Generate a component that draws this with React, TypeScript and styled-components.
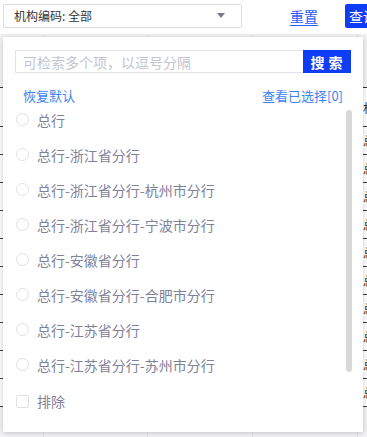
import React from 'react';
import styled, { createGlobalStyle } from 'styled-components';

const GlobalStyle = createGlobalStyle`
  html, body {
    margin: 0;
    padding: 0;
    background: #ffffff;
    font-family: "Noto Sans CJK SC", "Noto Sans", "Liberation Sans", sans-serif;
  }
`;

const Page = styled.div`
  position: relative;
  width: 367px;
  height: 437px;
  overflow: hidden;
  background: #fff;
`;

const Toolbar = styled.div`
  display: flex;
  align-items: center;
  height: 34px;
  padding: 0 0 0 3px;
  box-sizing: border-box;
  white-space: nowrap;
`;

const SelectBox = styled.div`
  display: flex;
  align-items: center;
  justify-content: space-between;
  flex: none;
  width: 239px;
  height: 24px;
  box-sizing: border-box;
  border: 1px solid #dcdce4;
  border-radius: 2px;
  padding: 0 16px 0 10px;
  font-size: 12px;
  color: #333;
  margin-top: -3px;
`;

const Caret = styled.span`
  width: 0;
  height: 0;
  border-left: 4px solid transparent;
  border-right: 4px solid transparent;
  border-top: 5px solid #7a7a82;
`;

const LinkButton = styled.span`
  flex: none;
  margin-left: 48px;
  font-size: 14px;
  color: #2a5cf6;
  text-decoration: underline;
  text-underline-offset: 3px;
  margin-top: -3px;
`;

const PrimaryButton = styled.div`
  flex: none;
  margin-left: 27px;
  height: 24px;
  padding: 0 10px 0 4px;
  display: flex;
  align-items: center;
  background: #0f3cf5;
  color: #fff;
  font-size: 14px;
  border-radius: 2px 0 0 2px;
  margin-top: -3px;
`;

const Table = styled.div`
  display: flex;
  flex-direction: column;
`;

const HeadRow = styled.div`
  display: grid;
  grid-template-columns: 44px 104px 105px 105px 40px;
  height: 53px;
  background: #f3f3f5;
  border-bottom: 1px solid #333;
`;

const Row = styled.div<{ $h: number }>`
  display: grid;
  grid-template-columns: 44px 104px 105px 105px 40px;
  height: ${p => p.$h}px;
  box-sizing: border-box;
  border-bottom: 1px solid #3a3a3a;
  font-size: 12px;
  color: #333;
`;

const FootRow = styled(HeadRow)`
  height: 40px;
  border-bottom: none;
`;

const Cell = styled.div`
  border-right: 1px solid #e4e4e8;
  display: flex;
  align-items: center;
  padding-left: 5px;
  overflow: hidden;
  white-space: nowrap;
`;

const Popover = styled.div`
  position: absolute;
  left: 3px;
  top: 37px;
  width: 360px;
  height: 395px;
  background: #fff;
  box-shadow: 0 1px 6px rgba(0, 0, 0, 0.2);
  display: flex;
  flex-direction: column;
  box-sizing: border-box;
  padding-top: 13px;
`;

const SearchRow = styled.div`
  display: flex;
  height: 23px;
  margin: 0 12px;
`;

const SearchInput = styled.div`
  flex: 1;
  box-sizing: border-box;
  border: 1px solid #e2e3ea;
  border-right: none;
  display: flex;
  align-items: center;
  padding-left: 7px;
  font-size: 14px;
  color: #c3c5cf;
`;

const SearchButton = styled.div`
  width: 48px;
  background: #0f3cf5;
  color: #fff;
  font-size: 14px;
  font-weight: 700;
  letter-spacing: 4px;
  display: flex;
  align-items: center;
  justify-content: center;
  padding-left: 3px;
  box-sizing: border-box;
`;

const LinkRow = styled.div`
  display: flex;
  justify-content: space-between;
  align-items: center;
  height: 18px;
  margin: 13px 20px 0 20px;
  font-size: 13px;
  color: #3d82f2;
`;

const List = styled.div`
  position: relative;
  height: 280px;
  overflow: hidden;
`;

const Item = styled.div`
  display: flex;
  align-items: center;
  height: 35px;
  padding-left: 13px;
  font-size: 14px;
  color: #7e8198;
  margin-top: -2px;
  margin-bottom: 2px;
`;

const Radio = styled.span`
  width: 13px;
  height: 13px;
  box-sizing: border-box;
  border: 1px solid #dfe0e8;
  border-radius: 50%;
  margin-right: 8px;
  flex: none;
`;

const ScrollThumb = styled.div`
  position: absolute;
  right: 11px;
  top: 6px;
  width: 6px;
  height: 262px;
  border-radius: 3px;
  background: #d8d8da;
`;

const Footer = styled.div`
  display: flex;
  align-items: center;
  height: 34px;
  padding-left: 13px;
  font-size: 14px;
  color: #7e8198;
`;

const Checkbox = styled.span`
  width: 13px;
  height: 13px;
  box-sizing: border-box;
  border: 1px solid #dfe0e8;
  border-radius: 2px;
  margin-right: 8px;
`;

const options = [
  '总行',
  '总行-浙江省分行',
  '总行-浙江省分行-杭州市分行',
  '总行-浙江省分行-宁波市分行',
  '总行-安徽省分行',
  '总行-安徽省分行-合肥市分行',
  '总行-江苏省分行',
  '总行-江苏省分行-苏州市分行',
];

const rowHeights = [39, 28, 28, 28, 28, 28, 28, 28, 28, 28, 28];

export default function App() {
  return (
    <Page>
      <GlobalStyle />
      <Toolbar>
        <SelectBox>
          <span>机构编码: 全部</span>
          <Caret />
        </SelectBox>
        <LinkButton>重置</LinkButton>
        <PrimaryButton>查询</PrimaryButton>
      </Toolbar>
      <Table>
        <HeadRow>
          <Cell /><Cell /><Cell /><Cell /><Cell />
        </HeadRow>
        {rowHeights.map((h, i) => (
          <Row key={i} $h={h}>
            <Cell /><Cell /><Cell /><Cell />
            <Cell>{i === 0 ? '机构' : '总行'}</Cell>
          </Row>
        ))}
        <FootRow>
          <Cell /><Cell /><Cell /><Cell /><Cell />
        </FootRow>
      </Table>

      <Popover>
        <SearchRow>
          <SearchInput>可检索多个项，以逗号分隔</SearchInput>
          <SearchButton>搜索</SearchButton>
        </SearchRow>
        <LinkRow>
          <span>恢复默认</span>
          <span>查看已选择[0]</span>
        </LinkRow>
        <List>
          {options.map(o => (
            <Item key={o}>
              <Radio />
              {o}
            </Item>
          ))}
          <ScrollThumb />
        </List>
        <Footer>
          <Checkbox />
          排除
        </Footer>
      </Popover>
    </Page>
  );
}
